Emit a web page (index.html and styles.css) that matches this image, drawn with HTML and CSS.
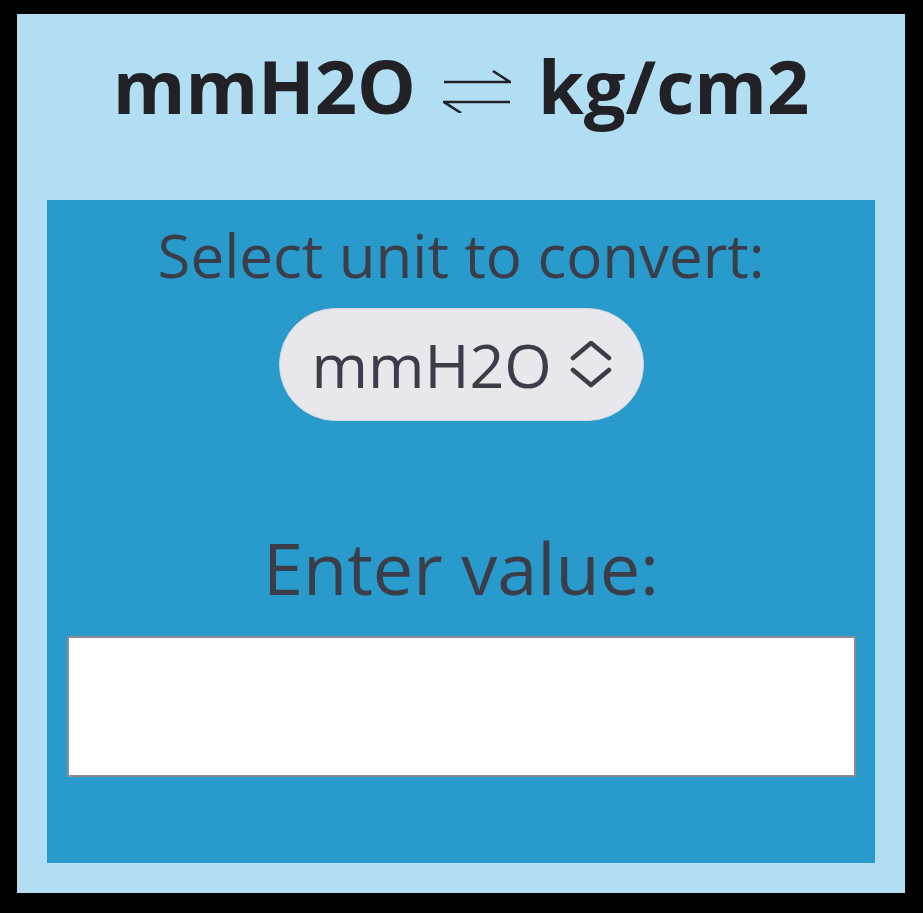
FILE: index.html
```html
<!DOCTYPE html>
<html lang="en">
<head>
    <meta charset="UTF-8">
    <meta name="viewport" content="width=device-width, initial-scale=1.0">
    <title>mmH2O to kg/cm2</title>
    <link rel="stylesheet" href="styles.css">
</head>
<body>
    <div class="converter">
        <h1 class="title">
            <span>mmH2O</span>
            <!-- flecha doble de conversion -->
            <svg class="swapIcon" width="68" height="44" viewBox="0 0 68 44" aria-hidden="true">
                <path d="M1 13 H67 L50 2" />
                <path d="M67 33 H1 L18 44" />
            </svg>
            <span>kg/cm2</span>
        </h1>

        <div class="panel">
            <label class="unitLabel" for="unit">Select unit to convert:</label>
            <div class="selectBox">
                <select id="unit">
                    <option value="mmH2O">mmH2O</option>
                    <option value="kg/cm2">kg/cm2</option>
                </select>
                <svg class="chevrons" width="42" height="48" viewBox="0 0 42 48" aria-hidden="true">
                    <path d="M3 17 L21 2 L39 17" />
                    <path d="M3 29 L21 44 L39 29" />
                </svg>
            </div>

            <label class="valueLabel" for="value">Enter value:</label>
            <input type="text" id="value" class="valueInput">
        </div>
    </div>
</body>
</html>
```

FILE: styles.css
```css
/* variables */
:root{
    --textoOscuro: #222226;
    --textoGris: #3b3d48;
    --azulClaro: #b1def2;
    --azulFuerte: #289acc;
}

body{
    margin: 0;
    background-color: #000;
    font-family: 'Open Sans', 'Noto Sans', sans-serif;
}

/* caja principal */
.converter{
    border: solid #000;
    border-width: 14px 18px 20px 17px;
    background-color: var(--azulClaro);
    height: 879px;
    box-sizing: content-box;
    display: flex;
    flex-direction: column;
}

/* titulo */
.title{
    margin: 0;
    height: 186px;
    padding-top: 22px;
    box-sizing: border-box;
    display: flex;
    justify-content: center;
    align-items: flex-start;
    gap: 27px;
    font-size: 74px;
    font-weight: 700;
    line-height: 100px;
    color: var(--textoOscuro);
}

.swapIcon{
    margin-top: 33px;
    fill: none;
    stroke: var(--textoOscuro);
    stroke-width: 2.6;
}

/* panel azul */
.panel{
    flex: 1;
    margin: 0 30px 30px;
    background-color: var(--azulFuerte);
    display: flex;
    flex-direction: column;
    align-items: center;
    padding-top: 14px;
}

.unitLabel{
    font-size: 60px;
    line-height: 82px;
    color: var(--textoGris);
}

/* selector redondeado */
.selectBox{
    margin-top: 12px;
    width: 365px;
    height: 113px;
    box-sizing: border-box;
    padding: 0 31px 0 32px;
    border: 1px solid #d6d7de;
    border-radius: 57px;
    background-color: #e8e8ec;
    display: flex;
    align-items: center;
    gap: 20px;
}

.selectBox select{
    appearance: none;
    -webkit-appearance: none;
    border: none;
    background: transparent;
    padding: 0;
    margin: 0;
    font-family: inherit;
    font-size: 61px;
    color: var(--textoGris);
    outline: none;
    flex: 1;
    min-width: 0;
    width: 0;
    cursor: pointer;
}

.chevrons{
    flex-shrink: 0;
    fill: none;
    stroke: var(--textoGris);
    stroke-width: 4.6;
    stroke-linecap: round;
    stroke-linejoin: round;
}

.valueLabel{
    margin-top: 97px;
    font-size: 72px;
    line-height: 98px;
    color: var(--textoGris);
}

/* campo de valor */
.valueInput{
    margin-top: 20px;
    width: 789px;
    height: 141px;
    box-sizing: border-box;
    border: 2px solid #8b8b94;
    background-color: #fff;
    font-family: inherit;
    font-size: 40px;
    padding: 0 16px;
    outline: none;
}
```
